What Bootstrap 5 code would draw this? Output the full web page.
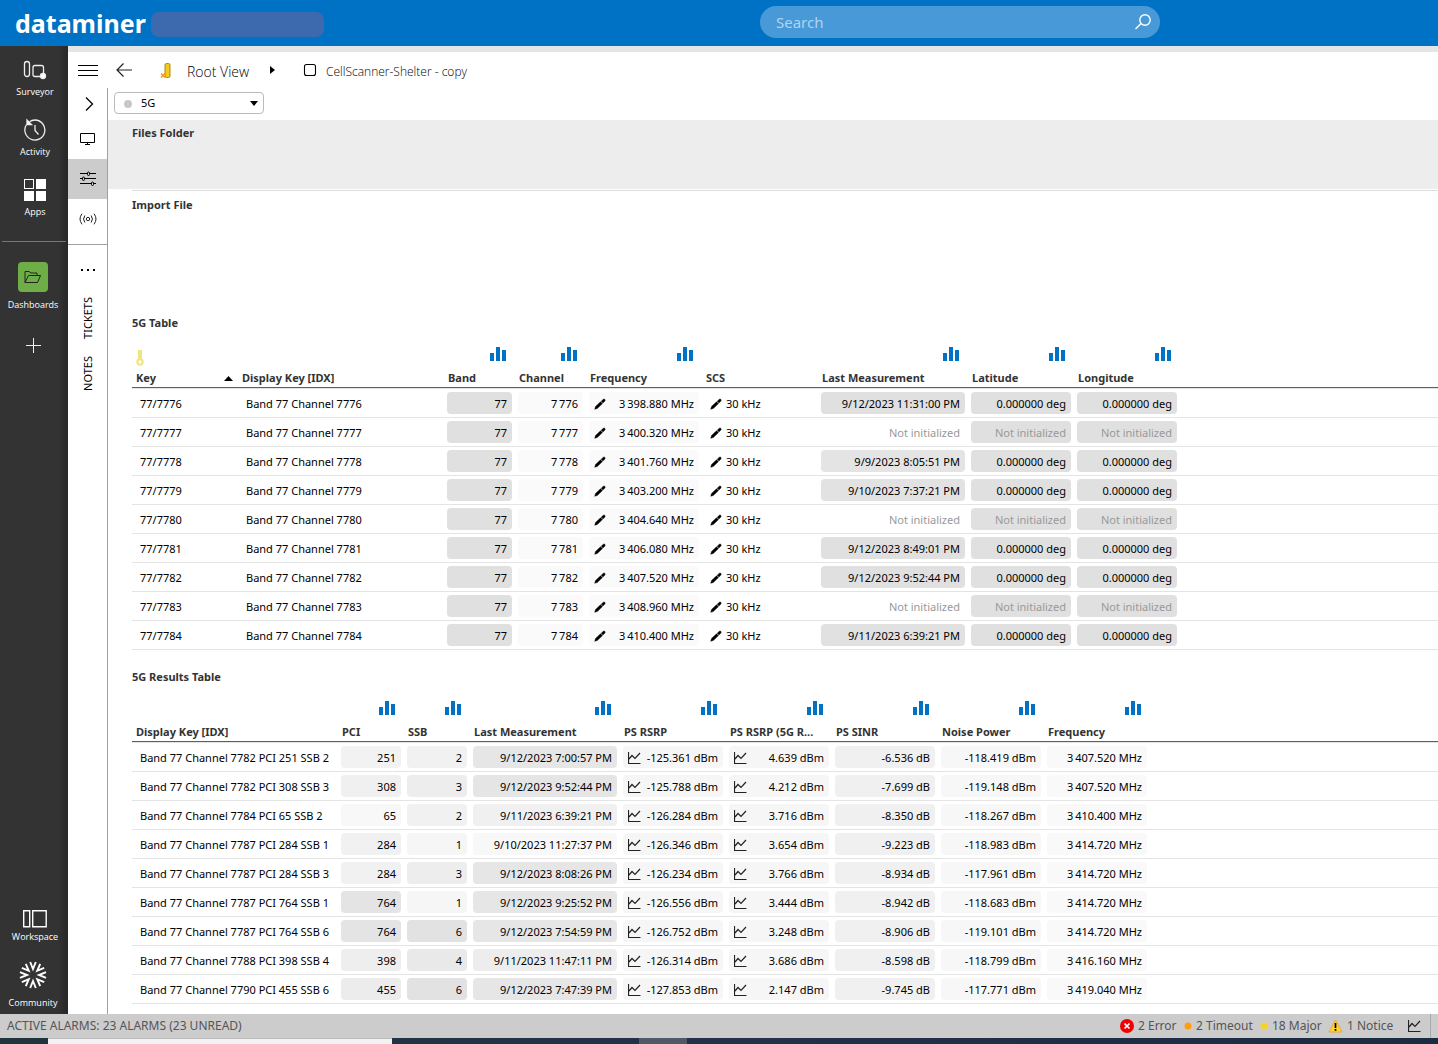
<!DOCTYPE html>
<html lang="en">
<head>
<meta charset="utf-8">
<meta name="viewport" content="width=device-width, initial-scale=1">
<title>CellScanner-Shelter - copy</title>
<link href="https://cdn.jsdelivr.net/npm/bootstrap@5.3.0/dist/css/bootstrap.min.css" rel="stylesheet">
<style>
body{font-family:"Noto Sans","Open Sans",sans-serif;font-size:11px;line-height:16px;color:#000;background:#fff}
a{color:inherit;text-decoration:none}
button{border:0;background:none;padding:0;color:inherit}
svg{display:block;flex:none}
.topbar{height:46px;background:#0072c6}
.brand{width:151px;padding-left:15px;font-weight:700;font-size:25px;line-height:44px;color:#fff}
.userchip{width:173px;height:25px;margin-top:2px;border-radius:8px;background:#3d6aae}
.spacer{width:436px;flex-shrink:1}
.searchbox{width:400px;height:32px;border-radius:16px;background:#4799d8;padding:0 8px 0 16px;margin-bottom:2px}
.searchbox input{border:0;background:none;outline:0;padding:0;font-size:15px;line-height:20px;color:#fff;min-width:0}
.searchbox input::placeholder{color:#b3d3ef;opacity:1}
.rail{width:68px;background:linear-gradient(90deg,#333 58px,#272727);color:#fff;font-family:"Open Sans","Noto Sans",sans-serif;font-size:9px;line-height:12px}
.rail a{width:66px;height:60px;padding-top:11px;gap:5px}
.rail .main-item{width:70px}
.rail .tile{width:30px;height:30px;border-radius:4px;background:#6fae46}
.rail .dash{margin-top:9px;gap:7px}
.rail .plus{width:66px;margin-top:27px}
.rail .low{height:52px;gap:2px}
.rail .tall{height:64px;gap:8px}
.rail hr{margin:15px 2px 0;width:64px;opacity:1;border-color:#777}
.strip{height:6px;background:#e5e5e5}
.crumbs{height:36px;font-family:"Open Sans","Noto Sans",sans-serif;font-weight:300;color:#000}
.rootview{font-size:14px;line-height:20px;padding-top:4px;width:83px}
.element{font-size:12px;line-height:20px;padding-top:4px}
.pages{width:40px;border-right:1px solid #a0a0a0}
.pages button{height:40px;width:100%;display:flex;align-items:center;justify-content:center}
.pages .first{height:31px}
.pages .picked{background:#ccc}
.pages .parting{border-top:1px solid #a0a0a0;height:50px;margin-top:5px}
.pages .upright{writing-mode:vertical-rl;transform:rotate(180deg);line-height:18px;margin-top:3px;margin-bottom:14px}
.pagepick{position:relative;width:150px;margin:4px 0 6px 6px}
.pagepick select{appearance:none;width:100%;height:22px;border:1px solid #bbb;border-radius:4px;background:#fff;padding:0 24px 0 26px;font-size:11px;line-height:18px;color:#000}
.pagepick i{position:absolute;left:10px;top:8px;width:8px;height:8px;border-radius:4px;background:#c8c8c8}
.pagepick svg{position:absolute;right:6px;top:9px}
.caption{font-size:11px;line-height:16px;font-weight:700;color:#333;margin:0}
.folder{background:#ededed;height:69px;padding:5px 24px}
.import{margin-left:24px;margin-top:1px;border-top:1px solid #ddd;height:125px;padding-top:6px}
.grid{table-layout:fixed;width:100%;border-collapse:separate;border-spacing:0;margin-top:8px}
.grid th{height:49px;border-bottom:1px solid #1c6fb8;box-shadow:0 1px #e4e4e4;padding:0 4px 1px;vertical-align:bottom;font-weight:700;color:#333;white-space:nowrap}
.grid th svg{margin:0 5px 9px auto}
.grid th .keymark{margin:0 0 4px 0}
.grid th .sortmark{margin:0 1px 0 0}
.grid td{border-bottom:1px solid #e4e4e4;padding:3px;white-space:nowrap}
.grid tbody tr:first-child td{padding-top:4px}
.pill{height:22px;border-radius:4px;padding:1px 5px 0;gap:4px}
.unset{color:#999}
.results{margin-top:19px}
.alarms{height:24px;background:#ccc;color:#555;font-size:12px;line-height:16px;padding:0 7px}
.alarms .count{width:80px;gap:4px}
.alarms .count.mid{width:76px}
.alarms .count.narrow{width:68px}
.alarms .count.least{width:64px}
.alarms .edge{width:1px;height:24px;margin-left:9px;background:#aaa}
.taskbar{height:6px;background:linear-gradient(90deg,#1f343c,#25304a 50%,#1b2c40)}
.taskbar .open{width:344px;margin-left:48px;background:#f2f2f2;border-top:1px solid #bbb}
.taskbar .app{width:48px;margin-left:247px;background:#4f5967}
</style>
<script src="https://cdn.jsdelivr.net/npm/bootstrap@5.3.0/dist/js/bootstrap.bundle.min.js"></script>
</head>
<body>
<svg width="0" height="0" class="position-absolute">
<symbol id="bars" viewBox="0 0 16 14"><path d="M0 6h4v8H0zM6 0h4v14H6zM12 3h4v11h-4z" fill="#0072c6"/></symbol>
<symbol id="pen" viewBox="0 0 12 12"><path d="M.7 11.300L1.500 8.500 6.500 3.800 8.500 5.600 3.300 10.500zM7.200 3.200L9.300 1.200Q10.300 .7 11 1.500 11.500 2.200 10.900 3L9 5z" fill="#000" stroke="#000" stroke-width=".4"/></symbol>
<symbol id="trend" viewBox="0 0 13 12"><path d="M.5 0v11.500H12.500M1 7l3-3.500 3 3 5-5.500" fill="none" stroke="#222" stroke-width="1.200"/></symbol>
</svg>
<div class="d-flex flex-column min-vh-100">
<header class="topbar d-flex align-items-center">
  <a class="brand" href="#">dataminer</a>
  <span class="userchip"></span>
  <span class="spacer"></span>
  <label class="searchbox d-flex align-items-center">
    <input class="flex-grow-1" type="text" placeholder="Search" aria-label="Search">
    <svg width="18" height="18" viewBox="0 0 18 18" fill="none" stroke="#fff" stroke-width="1.400"><circle cx="11" cy="7" r="5.200"/><path d="M7 10.500L1.500 16"/></svg>
  </label>
</header>
<div class="d-flex flex-grow-1">
  <nav class="rail d-flex flex-column flex-shrink-0">
    <a class="main-item d-flex flex-column align-items-center" href="#"><svg width="26" height="24" viewBox="0 0 26 24" fill="none" stroke="#eee" stroke-width="1.300"><rect x="2.500" y="4.500" width="5" height="15" rx="2.500"/><rect x="11" y="8.500" width="10.500" height="11" rx="2"/><circle cx="21" cy="19" r="2.500" fill="#fff"/></svg>Surveyor</a>
    <a class="main-item d-flex flex-column align-items-center" href="#"><svg width="26" height="24" viewBox="0 0 26 24" fill="none" stroke="#eee" stroke-width="1.300"><path d="M4.500 7.500a10 10 0 1 0 8.500-4.500c-2.200 0-4 .6-5.500 1.800M13 8v5.500l3.500 4"/><path d="M5 3v4.500h4.500z" fill="#fff"/></svg>Activity</a>
    <a class="main-item d-flex flex-column align-items-center" href="#"><svg width="26" height="24" viewBox="0 0 26 24" fill="#fff"><rect x="2.500" y="2.500" width="9" height="9" fill="none" stroke="#fff"/><path d="M14 2h10v10H14zM2 14h10v10H2zM14 14h10v10H14z"/></svg>Apps</a>
    <hr>
    <a class="dash d-flex flex-column align-items-center" href="#"><span class="tile d-flex align-items-center justify-content-center"><svg width="18" height="14" viewBox="0 0 18 14" fill="none" stroke="#222"><path d="M1 12.500V1.500h4l2 1.500h6v2M1 12.500L4.500 5.500h12L13.500 12.500z"/></svg></span>Dashboards</a>
    <button type="button" class="plus d-flex justify-content-center" aria-label="Add"><svg width="15" height="15" viewBox="0 0 15 15" stroke="#eee"><path d="M7.500 0v15M0 7.500h15"/></svg></button>
    <div class="mt-auto">
      <a class="main-item low d-flex flex-column align-items-center" href="#"><svg width="26" height="20" viewBox="0 0 26 20" fill="none" stroke="#fff" stroke-width="1.400"><path d="M1.700 1.700h6v16h-6zM10.700 1.700h13.500v16h-13.500z"/></svg>Workspace</a>
      <a class="tall d-flex flex-column align-items-center" href="#"><svg width="28" height="28" viewBox="-14 -14 28 28" fill="none" stroke="#fff" stroke-width="1.900" id="burst"></svg>Community</a>
    </div>
  </nav>
  <div class="flex-grow-1 d-flex flex-column">
    <div class="strip"></div>
    <div class="crumbs d-flex align-items-center">
      <button type="button" class="ms-2 me-3" aria-label="Menu"><svg width="24" height="12" viewBox="0 0 24 12" stroke="#000"><path d="M2 1.500h20M2 6.500h20M2 11.500h20"/></svg></button>
      <button type="button" aria-label="Back"><svg width="16" height="14" viewBox="0 0 16 14" fill="none" stroke="#222" stroke-width="1.200"><path d="M16 7H1M7.500 .5L1 7l6.500 6.500"/></svg></button>
      <svg class="ms-4 me-3" width="15" height="18" viewBox="0 0 15 18"><rect x="9" y="2.500" width="5" height="14" rx="1.500" fill="#f3ca1d" stroke="#a8871b"/><path d="M5 12.500l4 4M9 12.500l-4 4" stroke="#f7941d" stroke-width="1.500"/></svg>
      <a class="rootview" href="#">Root View</a>
      <svg width="5" height="8" viewBox="0 0 5 8"><path d="M0 0l5 4-5 4z"/></svg>
      <svg class="ms-4 me-2" width="19" height="16" viewBox="0 0 19 16"><rect x="5.500" y="2.500" width="11" height="11" rx="2" fill="none" stroke="#000" stroke-width="1.100"/></svg>
      <a class="element" href="#">CellScanner-Shelter - copy</a>
    </div>
    <div class="d-flex flex-grow-1">
      <nav class="pages flex-shrink-0 d-flex flex-column align-items-center">
        <button type="button" class="first" aria-label="Expand"><svg width="14" height="14" viewBox="0 0 14 14" fill="none" stroke="#000" stroke-width="1.300"><path d="M5 .5L11.500 7 5 13.500"/></svg></button>
        <button type="button" aria-label="Visual"><svg width="16" height="12" viewBox="0 0 16 12" fill="none" stroke="#000"><path d="M.5 .5h14v9H.5zM7.500 9.500v2M5 11.500h5"/></svg></button>
        <button type="button" class="picked" aria-label="Data"><svg width="16" height="16" viewBox="0 0 16 16" fill="#ccc" stroke="#000"><path d="M0 2.500h16M0 7.500h16M0 12.500h16"/><rect x="7.500" y="1" width="2" height="3.500" rx="1"/><rect x="2.500" y="6" width="2" height="3.500" rx="1"/><rect x="11.500" y="11" width="2" height="3.500" rx="1"/></svg></button>
        <button type="button" aria-label="Alarms"><svg width="18" height="12" viewBox="0 0 18 12" fill="none" stroke="#222"><circle cx="9" cy="6" r="1.700"/><path d="M5.800 2.500q-2.500 3.500 0 7M12.200 2.500q2.500 3.500 0 7M3 .7q-4 5.300 0 10.600M15 .7q4 5.300 0 10.600"/></svg></button>
        <button type="button" class="parting" aria-label="More"><svg width="16" height="4" viewBox="0 0 16 4"><path d="M1 1h2v2H1zM7 1h2v2H7zM13 1h2v2h-2z"/></svg></button>
        <a class="upright" href="#">TICKETS</a>
        <a class="upright" href="#">NOTES</a>
      </nav>
      <main class="flex-grow-1">
        <div class="pagepick">
          <select aria-label="Page"><option>5G</option></select><i></i>
          <svg width="8" height="5" viewBox="0 0 8 5"><path d="M0 0h8L4 5z"/></svg>
        </div>
        <section class="folder"><h2 class="caption">Files Folder</h2></section>
        <section class="import"><h2 class="caption">Import File</h2></section>
        <div class="ms-4">
          <h2 class="caption">5G Table</h2>
          <table class="grid" id="cells"></table>
          <h2 class="caption results">5G Results Table</h2>
          <table class="grid" id="results"></table>
        </div>
      </main>
    </div>
  </div>
</div>
<footer>
  <div class="alarms d-flex align-items-center">
    <span class="me-auto">ACTIVE ALARMS: 23 ALARMS (23 UNREAD)</span>
    <span class="count least d-flex align-items-center"><svg width="14" height="14" viewBox="0 0 14 14"><circle cx="7" cy="7" r="7" fill="#f00000"/><path d="M4.500 4.500l5 5M9.500 4.500l-5 5" stroke="#fff" stroke-width="1.700"/></svg>2 Error</span>
    <span class="count mid d-flex align-items-center"><svg width="8" height="8" viewBox="0 0 8 8"><circle cx="4" cy="4" r="3.500" fill="#ff9d12"/></svg>2 Timeout</span>
    <span class="count narrow d-flex align-items-center"><svg width="8" height="8" viewBox="0 0 8 8"><circle cx="4" cy="4" r="3.500" fill="#f5d22a"/></svg>18 Major</span>
    <span class="count d-flex align-items-center"><svg width="15" height="14" viewBox="0 0 15 14"><path d="M7.500 1L14 13H1z" fill="#ffd633" stroke="#f5a623" stroke-linejoin="round"/><path d="M7.500 4v5M7.500 10v1.800" stroke="#000" stroke-width="1.700"/></svg>1 Notice</span>
    <svg width="13" height="12"><use href="#trend"/></svg>
    <span class="edge"></span>
  </div>
  <div class="taskbar d-flex"><span class="open"></span><span class="app"></span></div>
</footer>
</div>
<script>
const use = (id, w, h) => `<svg width="${w}" height="${h}"><use href="#${id}"/></svg>`;
const keyMark = '<svg class="keymark" width="8" height="16" viewBox="0 0 8 16"><path d="M4 0v10" stroke="#f0e47c" stroke-width="4"/><circle cx="4" cy="12" r="2.700" fill="none" stroke="#f0e47c" stroke-width="2"/></svg>';
const sortMark = '<svg class="sortmark" width="9" height="5" viewBox="0 0 9 5"><path d="M0 5h9L4.500 0z"/></svg>';

// A column is [title, width, shows a summary icon].
function head(table, cols, keyed) {
  table.innerHTML = '<colgroup>' + cols.map(c => `<col style="width:${c[1]}px">`).join('') + '<col></colgroup><thead><tr>' +
    cols.map((c, i) => `<th scope="col">${c[2] ? use('bars', 16, 14) : ''}` +
      (keyed && !i ? keyMark + `<div class="d-flex align-items-center justify-content-between">${c[0]}${sortMark}</div>` : `<div>${c[0]}</div>`) + '</th>').join('') +
    '<th></th></tr></thead><tbody></tbody>';
}
const plain = t => `<td><div class="pill d-flex align-items-center">${t}</div></td>`;
const pill = (t, bg, icon = '') => `<td><div class="pill d-flex align-items-center justify-content-between" style="background:${bg}">${icon}<span class="ms-auto${t === NI ? ' unset' : ''}">${t}</span></div></td>`;
const add = (table, cells) => table.tBodies[0].insertAdjacentHTML('beforeend', '<tr>' + cells.join('') + '<td></td></tr>');
const NI = 'Not initialized', thin = n => n.replace(/^(\d)(\d{3})/, '$1\u2009$2');

const cellsTable = document.getElementById('cells');
head(cellsTable, [['Key',106],['Display Key [IDX]',206],['Band',71,1],['Channel',71,1],['Frequency',116,1],['SCS',116],['Last Measurement',150,1],['Latitude',106,1],['Longitude',106,1]], true);
[['7776','3398.880','9/12/2023 11:31:00 PM','#e0e0e0'],['7777','3400.320',NI],['7778','3401.760','9/9/2023 8:05:51 PM','#e4e4e4'],
 ['7779','3403.200','9/10/2023 7:37:21 PM','#e2e2e2'],['7780','3404.640',NI],['7781','3406.080','9/12/2023 8:49:01 PM','#e0e0e0'],
 ['7782','3407.520','9/12/2023 9:52:44 PM','#e0e0e0'],['7783','3408.960',NI],['7784','3410.400','9/11/2023 6:39:21 PM','#e1e1e1']
].forEach(([ch, f, when, tone]) => {
  const pos = when === NI ? NI : '0.000000 deg';
  add(cellsTable, [plain('77/' + ch), plain('Band 77 Channel ' + ch), pill('77', '#e0e0e0'), pill(thin(ch), '#fafafa'),
    pill(thin(f) + ' MHz', '#fafafa', use('pen', 12, 12)),
    plain(use('pen', 12, 12) + '<span>30 kHz</span>'),
    pill(when, tone || 'transparent'), pill(pos, '#e0e0e0'), pill(pos, '#e0e0e0')]);
});

const resultsTable = document.getElementById('results');
head(resultsTable, [['Display Key [IDX]',206],['PCI',66,1],['SSB',66,1],['Last Measurement',150,1],['PS RSRP',106,1],['PS RSRP (5G R...',106,1],['PS SINR',106,1],['Noise Power',106,1],['Frequency',106,1]]);
const ssbTone = {1:'#f6f6f6', 2:'#f1f1f1', 3:'#ededed', 4:'#e9e9e9', 6:'#e2e2e2'};
[['7782',251,2,'9/12/2023 7:00:57 PM','125.361','4.639','6.536','118.419','3407.520','#f2f2f2','#e6e6e6'],
 ['7782',308,3,'9/12/2023 9:52:44 PM','125.788','4.212','7.699','119.148','3407.520','#f0f0f0','#e5e5e5'],
 ['7784',65,2,'9/11/2023 6:39:21 PM','126.284','3.716','8.350','118.267','3410.400','#f8f8f8','#f0f0f0'],
 ['7787',284,1,'9/10/2023 11:27:37 PM','126.346','3.654','9.223','118.983','3414.720','#f1f1f1','#f8f8f8'],
 ['7787',284,3,'9/12/2023 8:08:26 PM','126.234','3.766','8.934','117.961','3414.720','#f1f1f1','#e6e6e6'],
 ['7787',764,1,'9/12/2023 9:25:52 PM','126.556','3.444','8.942','118.683','3414.720','#e4e4e4','#e6e6e6'],
 ['7787',764,6,'9/12/2023 7:54:59 PM','126.752','3.248','8.906','119.101','3414.720','#e4e4e4','#e6e6e6'],
 ['7788',398,4,'9/11/2023 11:47:11 PM','126.314','3.686','8.598','118.799','3416.160','#eee','#ededed'],
 ['7790',455,6,'9/12/2023 7:47:39 PM','127.853','2.147','9.745','117.771','3419.040','#ececec','#e6e6e6']
].forEach(([ch, pci, ssb, when, rsrp, gain, sinr, noise, f, pciTone, whenTone]) => {
  add(resultsTable, [plain(`Band 77 Channel ${ch} PCI ${pci} SSB ${ssb}`), pill(pci, pciTone), pill(ssb, ssbTone[ssb]), pill(when, whenTone),
    pill(`-${rsrp} dBm`, '#f6f6f6', use('trend', 13, 12)), pill(`${gain} dBm`, '#f6f6f6', use('trend', 13, 12)),
    pill(`-${sinr} dB`, '#f0f0f0'), pill(`-${noise} dBm`, '#f7f7f7'), pill(thin(f) + ' MHz', '#f9f9f9')]);
});

// Sixteen spokes in eight converging pairs.
document.getElementById('burst').innerHTML = Array.from({length: 8}, (_, i) =>
  `<path transform="rotate(${i * 45})" d="M-2.800 -13L0 -6L2.800 -13"/>`).join('');
</script>
</body>
</html>
